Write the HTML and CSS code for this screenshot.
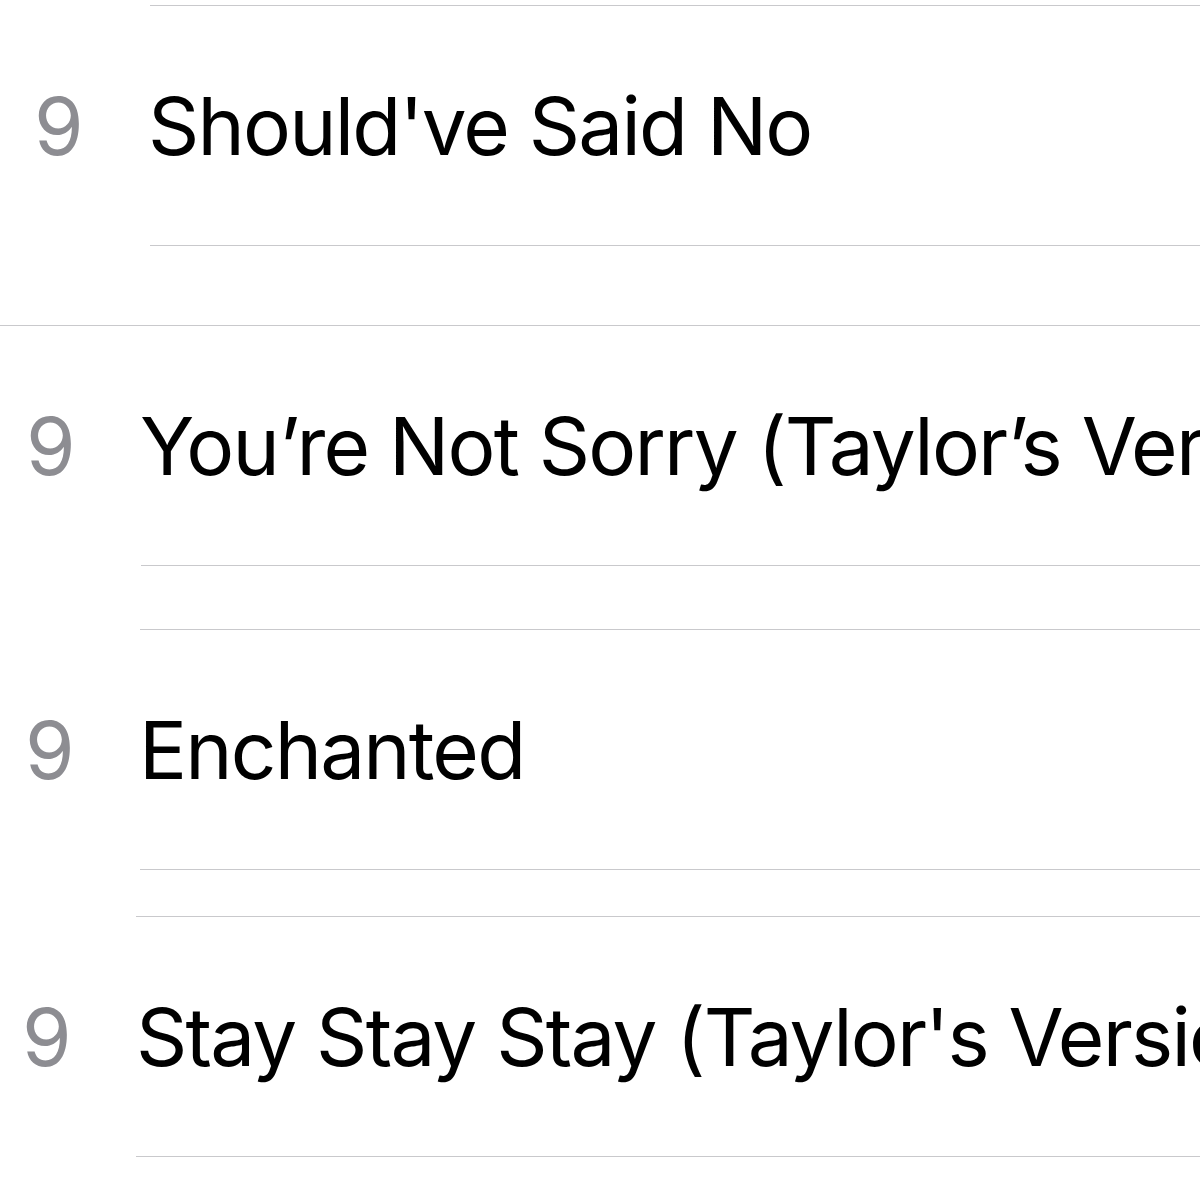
FILE: index.html
```html
<!DOCTYPE html>
<html>
<head>
<meta charset="utf-8">
<link rel="stylesheet" href="styles.css">
</head>
<body>
<div class="page">
  <section class="block block-a">
    <div class="sep sep-a"></div>
    <div class="row row-a"><span class="num">9</span><span class="title">Should've Said No</span></div>
    <div class="sep sep-a"></div>
  </section>
  <section class="block block-b">
    <div class="sep sep-full"></div>
    <div class="row row-b"><span class="num">9</span><span class="title">You’re Not Sorry (Taylor’s Version)</span></div>
    <div class="sep sep-b"></div>
  </section>
  <section class="block block-c">
    <div class="sep sep-c"></div>
    <div class="row row-c"><span class="num">9</span><span class="title">Enchanted</span></div>
    <div class="sep sep-c"></div>
  </section>
  <section class="block block-d">
    <div class="sep sep-d"></div>
    <div class="row row-d"><span class="num">9</span><span class="title">Stay Stay Stay (Taylor's Version)</span></div>
    <div class="sep sep-d"></div>
  </section>
</div>
</body>
</html>
```
FILE: styles.css
```css
html, body {
  margin: 0;
  padding: 0;
  background: #ffffff;
}
.page {
  width: 1200px;
  height: 1200px;
  overflow: hidden;
  display: flex;
  flex-direction: column;
  font-family: Inter, "Liberation Sans", sans-serif;
}
.block {
  display: flex;
  flex-direction: column;
}
.block-a { margin-top: 5px; }
.block-b { margin-top: 79px; }
.block-c { margin-top: 63px; }
.block-d { margin-top: 46px; }
.sep {
  height: 1px;
  background: #c9c9cc;
}
.sep-a { margin-left: 150px; }
.sep-full { margin-left: 0; }
.sep-b { margin-left: 141px; }
.sep-c { margin-left: 140px; }
.sep-d { margin-left: 136px; }
.row {
  height: 239px;
  display: flex;
  align-items: center;
  white-space: nowrap;
  overflow: hidden;
  font-size: 80px;
  line-height: 1;
}
.row-a { padding-left: 34px; }
.row-b { padding-left: 26px; }
.row-c { padding-left: 25px; }
.row-d { padding-left: 22px; }
.num {
  color: #8d8d92;
  width: 114px;
  flex: none;
}
.title {
  color: #000000;
  letter-spacing: -1.8px;
}
```
